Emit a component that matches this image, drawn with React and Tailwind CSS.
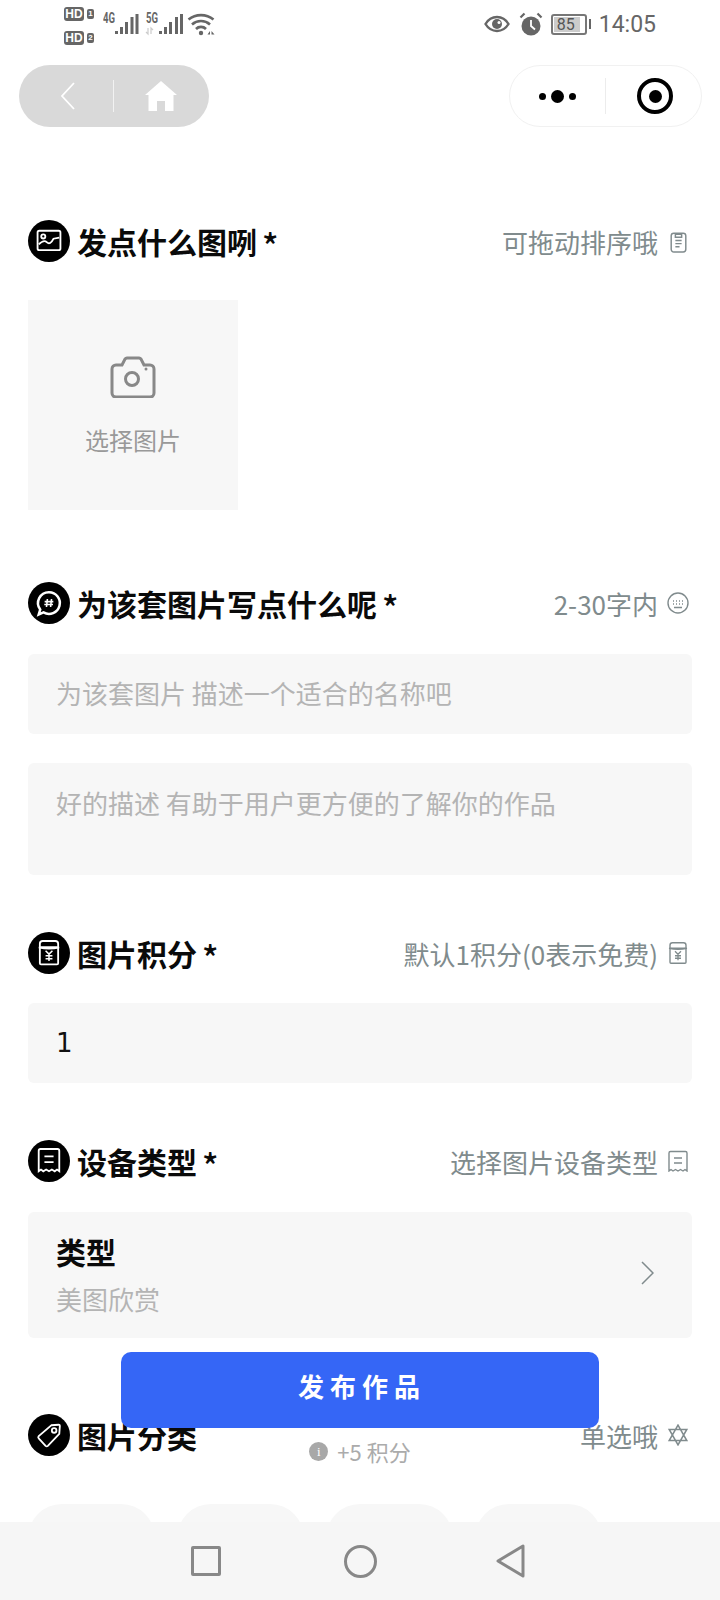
import React from 'react';

const cjk = "font-['Noto_Sans_CJK_SC','Noto_Sans',sans-serif]";

// icons drawn inside the black heading circles, and repeated small on the right
const ImageIcon = () => (
  <>
    <rect x="4" y="5" width="20" height="17" rx="1.500" />
    <circle cx="9" cy="10" r="1.800" />
    <path d="M5 17c3-3 5-4 7-2s4 1 6-3l5-1" />
  </>
);
const HashIcon = () => (
  <>
    <path d="M14 4.500a9.500 9.500 0 1 1-4.800 17.700L5 24l1.300-4.300A9.500 9.500 0 0 1 14 4.500z" strokeWidth="2.200" />
    <path d="M12.600 10.500l-.8 7M16.200 10.500l-.8 7M10.200 12.800h7.600M9.900 15.300h7.600" strokeWidth="1.400" />
  </>
);
const PointsIcon = () => (
  <>
    <path d="M6 9V6a2.500 2.500 0 0 1 2.500-2.500h11A2.500 2.500 0 0 1 22 6v3" />
    <path d="M5 9c6 1.500 12 1.500 18 0" />
    <rect x="6" y="9" width="16" height="15" rx="1" />
    <path d="M11 12l3 3 3-3M14 15v6M11 16.500h6M11 19h6" strokeWidth="1.300" />
  </>
);
const ReceiptIcon = () => (
  <>
    <path d="M5 5a1.500 1.500 0 0 1 1.500-1.500h15A1.500 1.500 0 0 1 23 5v18l-2-1.500-2 1.500-2.500-1.500-2.500 1.500-2.500-1.500L9 23l-2-1.500L5 23z" />
    <path d="M10 10h8M10 15h8" />
  </>
);
const TagIcon = () => (
  <>
    <path d="M16 5.500l6.500-.5a1 1 0 0 1 1 1l-.5 7-10 10.500a1.500 1.500 0 0 1-2 0L5 17a1.500 1.500 0 0 1 0-2z" />
    <circle cx="18.500" cy="10" r="2" />
  </>
);
const ClipIcon = () => (
  <>
    <path d="M5 5h6v3H5z" />
    <rect x="1" y="4" width="14" height="18" rx="2.500" />
    <path d="M5 11h6M5 14h6M5 17h4" />
  </>
);
const KeyboardIcon = () => (
  <>
    <circle cx="11" cy="11" r="10" />
    <path d="M6 9h1M9 9h1M12 9h1M15 9h1M6 12h1M9 12h1M12 12h1M15 12h1M7 15.500h8" />
  </>
);
const StarIcon = () => (
  <path d="M10 1l8 14H2zM10 19L2 5h16z" />
);

const hintIcons = {
  clip: { node: <ClipIcon />, box: '0 0 16 23', className: 'w-[17px] h-[24px]' },
  keyboard: { node: <KeyboardIcon />, box: '0 0 22 22', className: 'w-[22px] h-[22px]' },
  points: { node: <PointsIcon />, box: '4 2 20 23.500', className: 'w-[20px] h-[24px]' },
  receipt: { node: <ReceiptIcon />, box: '4 2 20 22', className: 'w-[20px] h-[22px]' },
  star: { node: <StarIcon />, box: '0 0 20 20', className: 'w-[22px] h-[22px]' },
};

const Heading = ({ icon, title, star = true, hint, hintIcon, className = '' }) => {
  const small = hintIcons[hintIcon];
  return (
    <div className={`flex items-center h-[42px] ${className}`}>
      <div className="w-[42px] h-[42px] rounded-full bg-black flex items-center justify-center shrink-0">
        <svg viewBox="0 0 28 28" className="w-8 h-8" fill="none" stroke="#fff" strokeWidth="1.600">
          {icon}
        </svg>
      </div>
      <h2 className={`ml-[7px] ${star ? 'pt-[4px]' : 'pt-0'} text-[30px] leading-[42px] font-semibold text-[#0a0a0a] whitespace-nowrap`}>
        {title}
        {star && <span className="ml-[5px] text-[34px] font-medium align-[-5px]">*</span>}
      </h2>
      <div className="ml-auto flex items-center text-[26px] leading-[42px] text-[#808b8d] whitespace-nowrap">
        <span className="pt-[2px]">{hint}</span>
        <span className="ml-[9px] mr-[3px] w-[22px] flex justify-center">
          <svg viewBox={small.box} className={small.className} fill="none" stroke="#808b8d" strokeWidth="1.400">
            {small.node}
          </svg>
        </span>
      </div>
    </div>
  );
};

const StatusBar = () => (
  <div className="h-[50px] relative flex items-start text-[#666]">
    <div className="ml-[64px] mt-[7px] flex flex-col gap-[10px]">
      {['1', '2'].map((n) => (
        <div key={n} className="flex items-center gap-[3px] h-[14px]">
          <span className="w-[20px] h-[14px] rounded-[3px] bg-[#666] text-white text-[12px] leading-[14px] font-bold text-center font-['Liberation_Sans',sans-serif]">HD</span>
          <span className="w-[7px] h-[10px] rounded-[2px] bg-[#666] text-white text-[8px] leading-[10px] font-bold text-center font-['Liberation_Sans',sans-serif]">{n}</span>
        </div>
      ))}
    </div>
    <svg viewBox="0 -8 125 38" className="ml-[9px] mt-[4px] w-[125px] h-[38px]" fill="#666">
      <text x="0" y="11" fontSize="15" fontWeight="700" textLength="12" lengthAdjust="spacingAndGlyphs" fontFamily="Roboto, sans-serif">4G</text>
      <rect x="12" y="19" width="3" height="3" />
      <rect x="17" y="15" width="3" height="7" />
      <rect x="22" y="10" width="3" height="12" />
      <rect x="27.500" y="5" width="3" height="17" />
      <rect x="32.500" y="2" width="3" height="20" />
      <text x="43" y="11" fontSize="15" fontWeight="700" textLength="12" lengthAdjust="spacingAndGlyphs" fontFamily="Roboto, sans-serif">5G</text>
      <path d="M45 16v6l-2-2M48 22v-6l2 2" fill="none" stroke="#ccc" strokeWidth="1.200" />
      <rect x="56" y="19" width="3" height="3" />
      <rect x="61" y="15" width="3" height="7" />
      <rect x="66" y="10" width="3" height="12" />
      <rect x="72" y="5" width="3" height="17" />
      <rect x="77" y="2" width="3" height="20" />
      <path d="M85.500 7.500a20 20 0 0 1 25 0M89 12.500a13.500 13.500 0 0 1 18 0M93 17a7 7 0 0 1 10 0" fill="none" stroke="#666" strokeWidth="2.600" />
      <circle cx="98" cy="21" r="2.200" />
      <path d="M104.500 22.500l2.500-3.500v3.500zM108.500 19l3 3.500h-3z" />
    </svg>
    <div className="absolute right-[64px] top-[11px] flex items-center h-[26px]">
      <svg viewBox="0 0 26 18" className="w-[26px] h-[18px]" fill="none" stroke="#666" strokeWidth="2.400">
        <path d="M1.500 9C4.500 4 8.500 2 13 2s8.500 2 11.500 7c-3 5-7 7-11.500 7S4.500 14 1.500 9z" />
        <circle cx="13" cy="9" r="5" fill="#666" stroke="none" />
        <circle cx="15" cy="7.500" r="1.500" fill="#fff" stroke="none" />
      </svg>
      <svg viewBox="0 0 24 24" className="ml-[9px] w-6 h-6" fill="#666">
        <circle cx="12" cy="14" r="9.500" />
        <path d="M12 8v6l4 3.500" fill="none" stroke="#fff" strokeWidth="1.800" />
        <path d="M1.500 5.500l4-4M22.500 5.500l-4-4" fill="none" stroke="#666" strokeWidth="2.200" />
      </svg>
      <div className="ml-[8px] w-[36px] h-[21px] rounded-[3px] border-2 border-[#777] p-px">
        <div className="h-full w-[26px] bg-[#ccc] text-[16px] leading-[15px] text-[#555] whitespace-nowrap pl-[3px] font-['Roboto',sans-serif]">85</div>
      </div>
      <div className="ml-[2px] w-[2px] h-[10px] bg-[#666]" />
      <span className="ml-[8px] pt-[3px] text-[23px] text-[#666] font-['Roboto',sans-serif]">14:05</span>
    </div>
  </div>
);

const NavCapsules = () => (
  <div className="h-[62px] mt-[15px] flex justify-between pl-[19px] pr-[18px]">
    <div className="w-[190px] rounded-full bg-[#d9d9d9] flex items-center">
      <svg viewBox="0 0 15 28" className="ml-[41px] w-[15px] h-[28px]" fill="none" stroke="#fff" strokeWidth="1.800">
        <path d="M14 1L2 14l12 13" />
      </svg>
      <div className="ml-[38px] w-px h-8 bg-[#f2f2f2]" />
      <svg viewBox="0 0 32 30" className="ml-[31px] w-[32px] h-[30px]" fill="#fff">
        <path d="M16 0L32 14h-3.500v16H20V20h-8v10H3.500V14H0z" />
      </svg>
    </div>
    <div className="w-[193px] rounded-full border border-[#f1f1f1] bg-white flex items-center">
      <div className="ml-[29px] flex items-center gap-[5px]">
        <span className="w-[7px] h-[7px] rounded-full bg-black" />
        <span className="w-[13px] h-[13px] rounded-full bg-black" />
        <span className="w-[7px] h-[7px] rounded-full bg-black" />
      </div>
      <div className="ml-[29px] w-px h-9 bg-[#ececec]" />
      <div className="ml-[31px] w-[36px] h-[36px] rounded-full border-[4px] border-black flex items-center justify-center">
        <span className="w-[13px] h-[13px] rounded-full bg-black" />
      </div>
    </div>
  </div>
);

const BottomBar = () => (
  <div className="absolute left-0 right-0 bottom-0 h-[78px] bg-[#f6f6f6] flex items-start">
    <span className="ml-[191px] mt-[24px] w-[30px] h-[30px] rounded-[2px] border-[3px] border-[#888]" />
    <span className="ml-[123px] mt-[23px] w-[33px] h-[33px] rounded-full border-[3px] border-[#888]" />
    <svg viewBox="0 0 30 34" className="ml-[118px] mt-[22px] w-[30px] h-[34px]" fill="none" stroke="#888" strokeWidth="3" strokeLinejoin="round">
      <path d="M3 17L28 2v30z" />
    </svg>
  </div>
);

export default function App() {
  return (
    <div className={`relative w-[720px] h-[1600px] overflow-hidden bg-white ${cjk}`}>
      <StatusBar />
      <NavCapsules />

      <main className="px-[28px] pt-[93px]">
        <Heading icon={<ImageIcon />} title="发点什么图咧" hint="可拖动排序哦" hintIcon="clip" />
        <button className="mt-[38px] w-[210px] h-[210px] bg-[#f7f7f7] flex flex-col items-center">
          <svg viewBox="1 1 46 42" className="mt-[56px] w-[46px] h-[42px]" fill="none" stroke="#888" strokeWidth="3">
            <path d="M3 14a4 4 0 0 1 4-4h6l3-6a3 3 0 0 1 2-1h12a3 3 0 0 1 2 1l3 6h6a4 4 0 0 1 4 4v24a4 4 0 0 1-4 4H7a4 4 0 0 1-4-4z" />
            <circle cx="23" cy="24" r="6.500" />
            <circle cx="37" cy="14" r="1.500" fill="#888" stroke="none" />
          </svg>
          <span className="mt-[28px] text-[24px] leading-[28px] text-[#999]">选择图片</span>
        </button>

        <Heading className="mt-[72px]" icon={<HashIcon />} title="为该套图片写点什么呢" hint="2-30字内" hintIcon="keyboard" />
        <div className="mt-[30px] h-[80px] rounded-[6px] bg-[#f7f7f7] px-[28px] pb-[4px] flex items-center text-[26px] text-[#b4b4b4]">
          为该套图片 描述一个适合的名称吧
        </div>
        <div className="mt-[29px] h-[112px] rounded-[6px] bg-[#f7f7f7] px-[28px] pt-[21px] text-[26px] leading-[38px] text-[#b4b4b4]">
          好的描述 有助于用户更方便的了解你的作品
        </div>

        <Heading className="mt-[57px]" icon={<PointsIcon />} title="图片积分" hint="默认1积分(0表示免费)" hintIcon="points" />
        <div className="mt-[29px] h-[80px] rounded-[6px] bg-[#f7f7f7] px-[28px] flex items-center text-[26px] text-[#111] font-['DejaVu_Sans',sans-serif]">
          1
        </div>

        <Heading className="mt-[57px]" icon={<ReceiptIcon />} title="设备类型" hint="选择图片设备类型" hintIcon="receipt" />
        <div className="mt-[30px] h-[126px] rounded-[6px] bg-[#f7f7f7] px-[28px] flex items-center justify-between">
          <div>
            <div className="text-[30px] leading-[40px] font-bold text-[#0a0a0a] -mt-[2px]">类型</div>
            <div className="mt-[10px] text-[26px] leading-[36px] text-[#b4b4b4]">美图欣赏</div>
          </div>
          <svg viewBox="0 0 13 24" className="mr-[10px] mb-[5px] w-[13px] h-[24px]" fill="none" stroke="#808b8d" strokeWidth="1.500">
            <path d="M1 1l11 11L1 23" />
          </svg>
        </div>

        <Heading className="mt-[76px]" star={false} icon={<TagIcon />} title="图片分类" hint="单选哦" hintIcon="star" />
        <div className="mt-[48px] flex gap-[22px]">
          {['风景', '动漫', '壁纸', '头像'].map((c) => (
            <span key={c} className="w-[127px] h-[68px] rounded-[34px] bg-[#f7f7f7] text-center text-[24px] leading-[59px] text-[#555]">
              {c}
            </span>
          ))}
        </div>
      </main>

      {/* floating publish button */}
      <div className="absolute left-[121px] top-[1352px] w-[478px] flex flex-col items-center">
        <button className="w-full h-[76px] pb-[10px] pl-[4px] rounded-[10px] bg-[#3566f6] text-white text-[26px] font-bold tracking-[6px]">
          发布作品
        </button>
        <div className="mt-[7px] flex items-center text-[22px] leading-[32px] text-[#ababab]">
          <span className="w-[19px] h-[19px] rounded-full bg-[#a8a8a8] text-white text-[13px] leading-[19px] text-center font-['Liberation_Serif',serif]">i</span>
          <span className="ml-[9px]">+5 积分</span>
        </div>
      </div>

      <BottomBar />
    </div>
  );
}
